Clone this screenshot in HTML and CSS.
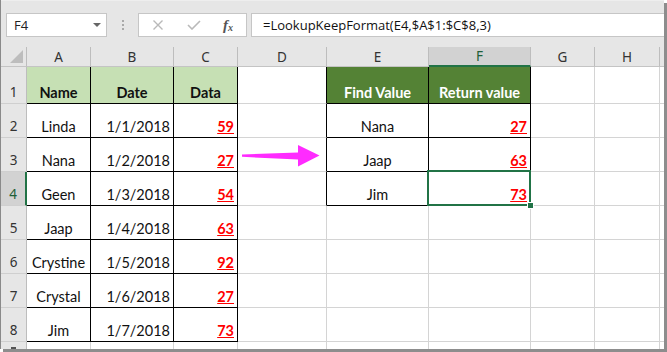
FILE: index.html
```html
<html>

<head>
    <meta charset="utf-8">
    <title>LookupKeepFormat</title>
    <link rel="stylesheet" href="styles.css">
</head>

<body>
    <div class="window">

        <!-- name box + formula bar -->
        <div class="toolbar">
            <div class="namebox">
                <span>F4</span>
                <span class="caret"></span>
            </div>
            <div class="grip"><i></i><i></i><i></i></div>
            <div class="fxbox">
                <svg width="12" height="10" viewBox="0 0 12 10">
                    <path d="M1.5 0.5 L10.5 9.5 M10.5 0.5 L1.5 9.5" stroke="#b9b9b9" stroke-width="1.4" fill="none" />
                </svg>
                <svg width="14" height="10" viewBox="0 0 14 10">
                    <path d="M1 5 L5 9 L13 1" stroke="#b9b9b9" stroke-width="1.6" fill="none" />
                </svg>
                <span class="fx">f<sub>x</sub></span>
            </div>
            <div class="formula">=LookupKeepFormat(E4,$A$1:$C$8,3)</div>
        </div>

        <!-- worksheet -->
        <div class="sheet">
            <div class="ch corner"><span class="tri"></span></div>
            <div class="ch">A</div>
            <div class="ch">B</div>
            <div class="ch">C</div>
            <div class="ch">D</div>
            <div class="ch">E</div>
            <div class="ch sel">F</div>
            <div class="ch">G</div>
            <div class="ch">H</div>
            <div class="ch last"></div>

            <div class="rh">1</div>
            <div class="c bk hd ctr">Name</div>
            <div class="c bk hd ctr">Date</div>
            <div class="c bk hd ctr">Data</div>
            <div class="c bkr"></div>
            <div class="c bk hd2 ctr">Find Value</div>
            <div class="c bk hd2 ctr">Return value</div>
            <div class="c"></div>
            <div class="c"></div>
            <div class="c last"></div>

            <div class="rh">2</div>
            <div class="c bk ctr">Linda</div>
            <div class="c bk right">1/1/2018</div>
            <div class="c bk num">59</div>
            <div class="c bkr"></div>
            <div class="c bk ctr">Nana</div>
            <div class="c bk num">27</div>
            <div class="c"></div>
            <div class="c"></div>
            <div class="c last"></div>

            <div class="rh">3</div>
            <div class="c bk ctr">Nana</div>
            <div class="c bk right">1/2/2018</div>
            <div class="c bk num">27</div>
            <div class="c bkr"></div>
            <div class="c bk ctr">Jaap</div>
            <div class="c bk num">63</div>
            <div class="c"></div>
            <div class="c"></div>
            <div class="c last"></div>

            <div class="rh sel">4</div>
            <div class="c bk ctr">Geen</div>
            <div class="c bk right">1/3/2018</div>
            <div class="c bk num">54</div>
            <div class="c bkr"></div>
            <div class="c bk ctr">Jim</div>
            <div class="c bk num active">73</div>
            <div class="c"></div>
            <div class="c"></div>
            <div class="c last"></div>

            <div class="rh">5</div>
            <div class="c bk ctr">Jaap</div>
            <div class="c bk right">1/4/2018</div>
            <div class="c bk num">63</div>
            <div class="c"></div>
            <div class="c"></div>
            <div class="c"></div>
            <div class="c"></div>
            <div class="c"></div>
            <div class="c last"></div>

            <div class="rh">6</div>
            <div class="c bk ctr">Crystine</div>
            <div class="c bk right">1/5/2018</div>
            <div class="c bk num">92</div>
            <div class="c"></div>
            <div class="c"></div>
            <div class="c"></div>
            <div class="c"></div>
            <div class="c"></div>
            <div class="c last"></div>

            <div class="rh">7</div>
            <div class="c bk ctr">Crystal</div>
            <div class="c bk right">1/6/2018</div>
            <div class="c bk num">27</div>
            <div class="c"></div>
            <div class="c"></div>
            <div class="c"></div>
            <div class="c"></div>
            <div class="c"></div>
            <div class="c last"></div>

            <div class="rh">8</div>
            <div class="c bk ctr">Jim</div>
            <div class="c bk right">1/7/2018</div>
            <div class="c bk num">73</div>
            <div class="c"></div>
            <div class="c"></div>
            <div class="c"></div>
            <div class="c"></div>
            <div class="c"></div>
            <div class="c last"></div>

            <div class="rh short"><span class="peek"></span></div>
            <div class="c"></div>
            <div class="c"></div>
            <div class="c"></div>
            <div class="c"></div>
            <div class="c"></div>
            <div class="c"></div>
            <div class="c"></div>
            <div class="c"></div>
            <div class="c last"></div>
        </div>

        <!-- pink arrow pointing at the result table -->
        <svg class="arrow" width="80" height="24" viewBox="241 144 80 24">
            <polygon points="242,154.4 298,152.4 298,145 319.5,155.6 298,166.5 298,159.6 242,156.8" fill="#ff2bff" />
        </svg>
    </div>
</body>

</html>
```

FILE: styles.css
```css
body {
    margin: 0;
    background: #fff;
}

.window {
    position: relative;
    width: 664px;
    height: 349px;
    box-sizing: border-box;
    border-left: 1px solid #8a8a8a;
    overflow: hidden;
    box-shadow: 3px 3px 0 #8d8d8d;
    background: #fff;
}

/* toolbar */
.toolbar {
    height: 47px;
    box-sizing: border-box;
    padding: 12px 0 10px 5px;
    display: flex;
    align-items: stretch;
    background: #e6e6e6;
    border-top: 1px solid #eeeeee;
    font-family: "Open Sans", "Noto Sans", sans-serif;
    font-size: 13px;
    color: #222;
}

.toolbar > div {
    background: #fff;
    border: 1px solid #c6c6c6;
    box-sizing: border-box;
}

.namebox {
    width: 101px;
    display: flex;
    align-items: center;
    justify-content: space-between;
    padding: 0 5px 0 7px;
}

.caret {
    width: 0;
    height: 0;
    border-left: 4px solid transparent;
    border-right: 4px solid transparent;
    border-top: 4px solid #666;
}

.toolbar > .grip {
    width: 31px;
    background: none;
    border: none;
    display: flex;
    flex-direction: column;
    align-items: center;
    justify-content: center;
    gap: 2px;
}

.grip i {
    width: 2px;
    height: 2px;
    background: #a9a9a9;
}

.fxbox {
    width: 109px;
    display: flex;
    align-items: center;
    padding: 0 0 0 13px;
}

.fxbox svg:nth-child(2) {
    margin-left: 23px;
}

.fx {
    margin-left: 22px;
    font-family: "Liberation Serif", serif;
    font-style: italic;
    font-weight: bold;
    font-size: 15px;
    color: #555;
}

.fx sub {
    font-size: 10px;
    vertical-align: -1px;
}

.toolbar > .formula {
    flex: 1;
    margin-left: 4px;
    padding-left: 11px;
    border-right: none;
    display: flex;
    align-items: center;
    font-size: 13px;
    color: #111;
}

/* sheet grid */
.sheet {
    display: grid;
    grid-template-columns: 26px 64px 83px 64px 89px 102px 102px 64px 65px 1fr;
    grid-template-rows: 20px 37px repeat(7, 34px) 20px;
    font-family: "Lato", "Liberation Sans", sans-serif;
    font-size: 14.5px;
    color: #111;
}

.sheet > div {
    box-sizing: border-box;
    border-right: 1px solid #d4d4d4;
    border-bottom: 1px solid #d4d4d4;
    white-space: nowrap;
}

.sheet > .last {
    border-right: none;
}

.ch {
    background: #e6e6e6;
    border-right-color: #bdbdbd !important;
    border-bottom-color: #c4c4c4 !important;
    display: flex;
    align-items: center;
    justify-content: center;
    font-family: "Noto Sans", sans-serif;
    font-size: 13.5px;
    color: #333;
}

.ch.sel {
    background: #d2d2d2;
    border-bottom: 2px solid #217346 !important;
    color: #1f5f38;
}

.corner {
    position: relative;
}

.tri {
    position: absolute;
    right: 3px;
    bottom: 3px;
    width: 0;
    height: 0;
    border-left: 13px solid transparent;
    border-bottom: 13px solid #bdbdbd;
}

.rh {
    background: #e6e6e6;
    border-right-color: #bdbdbd !important;
    border-bottom-color: #cfcfcf !important;
    display: flex;
    align-items: flex-end;
    justify-content: center;
    padding-bottom: 2px;
    font-family: "Noto Sans", sans-serif;
    font-size: 13.5px;
    color: #333;
}

.rh.sel {
    background: #d2d2d2;
    border-right: 2px solid #217346 !important;
    color: #1f5f38;
}

.rh.short {
    align-items: flex-start;
    padding: 5px 0 0;
}

/* top of the row 9 label, the rest is below the window edge */
.peek {
    width: 5px;
    height: 2px;
    background: #555;
}

.c {
    display: flex;
    align-items: flex-end;
    padding: 0 3px 2px 3px;
}

.sheet > .bk {
    border-right-color: #000;
    border-bottom-color: #000;
}

.sheet > .bkr {
    border-right-color: #000;
}

.ctr {
    justify-content: center;
}

.right {
    justify-content: flex-end;
}

.num {
    justify-content: flex-end;
    color: #ff0000;
    font-weight: bold;
    text-decoration: underline;
}

.hd {
    background: #c6e0b4;
    font-weight: bold;
}

.hd2 {
    background: #548235;
    color: #fff;
    font-weight: bold;
}

/* active cell F4 */
.active {
    position: relative;
}

.active::after {
    content: "";
    position: absolute;
    left: -2px;
    top: -2px;
    right: -1px;
    bottom: -1px;
    border: 2px solid #217346;
}

.active::before {
    content: "";
    position: absolute;
    right: -4px;
    bottom: -4px;
    width: 5px;
    height: 5px;
    background: #217346;
    border: 1px solid #fff;
    z-index: 2;
}

.arrow {
    position: absolute;
    left: 240px;
    top: 144px;
}
```
